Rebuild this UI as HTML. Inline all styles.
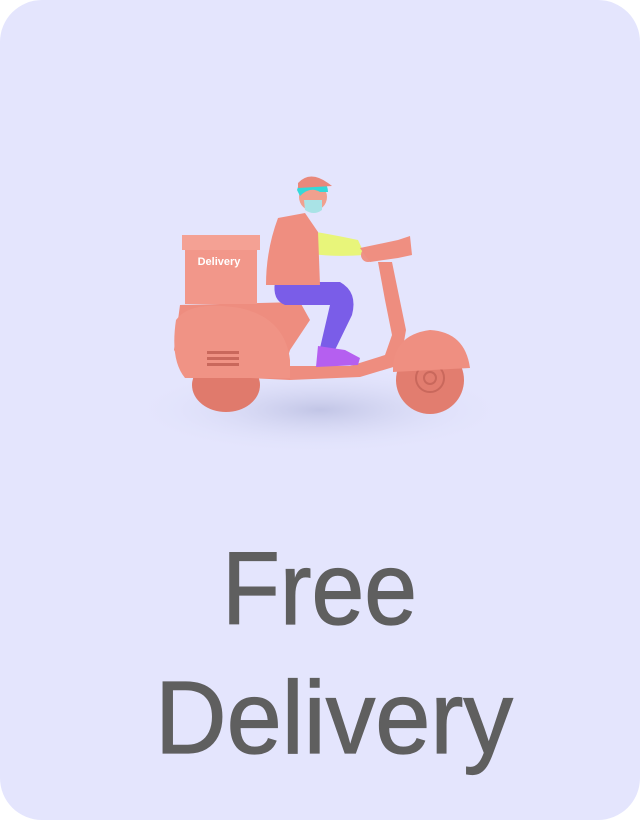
<!DOCTYPE html>
<html><head><style>
html,body{margin:0;padding:0;background:#fff;}
.card{position:absolute;left:0;top:0;width:640px;height:820px;border-radius:42px;background:#e4e5fd;overflow:hidden;}
svg{position:absolute;left:0;top:0;}
</style></head><body>
<div class="card">
<svg width="640" height="820" viewBox="0 0 640 820">
<defs>
<radialGradient id="sh" cx="0.5" cy="0.5" r="0.5">
<stop offset="0" stop-color="#b9bde0" stop-opacity="0.8"/>
<stop offset="1" stop-color="#e4e5fd" stop-opacity="0"/>
</radialGradient>
</defs>
<ellipse cx="320" cy="410" rx="190" ry="45" fill="url(#sh)"/>
<ellipse cx="226" cy="385" rx="34" ry="27" fill="#e07a6c"/>
<circle cx="430" cy="380" r="34" fill="#e27d6f"/>
<circle cx="430" cy="378" r="14" fill="none" stroke="#c9685c" stroke-width="2"/>
<circle cx="430" cy="378" r="6" fill="none" stroke="#c9685c" stroke-width="2"/>
<path d="M180 305 L300 302 L310 320 L290 350 L285 366 L350 366 L385 355 L392 335 L385 300 L378 262 L392 262 L406 330 L400 365 L360 377 L290 380 L250 378 L190 374 L174 350 Z" fill="#ee8d7f"/>
<path d="M176 320 Q190 300 240 308 Q285 318 290 360 L290 378 L185 378 Q170 360 176 320Z" fill="#f09385"/>
<rect x="207" y="351" width="32" height="3" fill="#c9685c"/>
<rect x="207" y="357" width="32" height="3" fill="#c9685c"/>
<rect x="207" y="363" width="32" height="3" fill="#c9685c"/>
<path d="M393 372 Q392 335 430 330 Q465 332 470 368 Z" fill="#ef8f81"/>
<rect x="185" y="248" width="72" height="56" fill="#f2978a"/>
<rect x="182" y="235" width="78" height="15" fill="#f4a194"/>
<text x="219" y="265" font-family="Liberation Sans, sans-serif" font-size="11" font-weight="bold" fill="#fff" text-anchor="middle">Delivery</text>
<path d="M275 282 L340 282 Q358 292 352 315 L335 350 L320 348 L330 305 L285 305 Q272 300 275 282Z" fill="#7a5de8"/>
<path d="M318 346 L345 350 L360 358 L358 365 L316 367 Z" fill="#b55ff0"/>
<path d="M290 228 Q320 232 358 240 L365 255 Q320 258 292 250 Z" fill="#e8f57a"/>
<circle cx="368" cy="255" r="7" fill="#ee9387"/>
<path d="M278 218 L305 213 L318 232 L320 285 L266 285 Q266 250 278 218Z" fill="#ef8e80"/>
<circle cx="313" cy="197" r="14" fill="#f0a08e"/>
<path d="M297 190 Q300 178 313 178 Q328 180 328 192 L320 192 Q310 186 300 196Z" fill="#34d9d9"/>
<path d="M298 183 Q310 170 328 183 L332 186 L298 188Z" fill="#e9887b"/>
<path d="M304 200 L322 200 L322 210 Q314 216 305 210Z" fill="#a9e3e6"/>
<path d="M360 248 L398 240 L410 236 L412 255 L398 258 L370 262 Z" fill="#ef8f81"/>
<g font-family="Liberation Sans, sans-serif" font-size="103" fill="#5f5f5f" stroke="#5f5f5f" stroke-width="1.2">
<text x="222" y="624" textLength="195" lengthAdjust="spacingAndGlyphs">Free</text>
<text x="155" y="753" textLength="358" lengthAdjust="spacingAndGlyphs">Delivery</text>
</g>
</svg>
</div>
</body></html>
